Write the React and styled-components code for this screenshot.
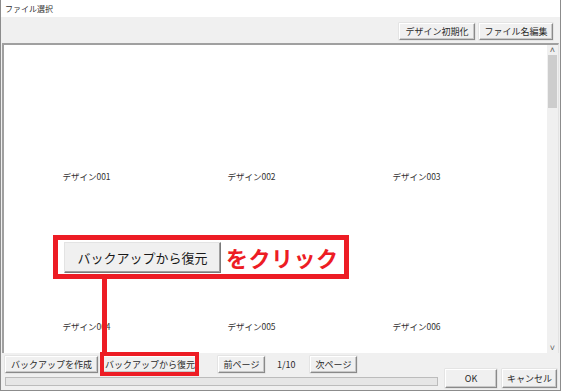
import styled, { createGlobalStyle } from "styled-components";

const GlobalStyle = createGlobalStyle`
  html, body {
    margin: 0;
    padding: 0;
    background: #ffffff;
  }
  * {
    box-sizing: border-box;
  }
  body {
    font-family: "Noto Sans CJK JP", "Liberation Sans", sans-serif;
  }
`;

const designs = [
  "デザイン001",
  "デザイン002",
  "デザイン003",
  "デザイン004",
  "デザイン005",
  "デザイン006",
];

const App = () => {
  return (
    <>
      <GlobalStyle />
      <Window>
        <TitleBar>ファイル選択</TitleBar>
        <Toolbar>
          <WinButton $w={76}>デザイン初期化</WinButton>
          <WinButton $w={74}>ファイル名編集</WinButton>
        </Toolbar>
        <Panel>
          <Grid>
            {designs.map((name) => (
              <Cell key={name}>
                <Thumb />
                <Label>{name}</Label>
              </Cell>
            ))}
          </Grid>
          <ScrollBar>
            <Arrow>˄</Arrow>
            <Thumbnail />
            <Track />
            <Arrow>˅</Arrow>
          </ScrollBar>
        </Panel>
        <Footer>
          <FooterLeft>
            <ButtonRow>
              <WinButton $w={93}>バックアップを作成</WinButton>
              <WinButton $w={94}>バックアップから復元</WinButton>
              <WinButton $w={47} $ml={16}>
                前ページ
              </WinButton>
              <PageCount>1/10</PageCount>
              <WinButton $w={47}>次ページ</WinButton>
            </ButtonRow>
            <Progress />
          </FooterLeft>
          <FooterRight>
            <WinButton $w={52} $h={19}>
              OK
            </WinButton>
            <WinButton $w={55} $h={19}>
              キャンセル
            </WinButton>
          </FooterRight>
        </Footer>

        <Callout>
          <BigButton>バックアップから復元</BigButton>
          <CalloutText>をクリック</CalloutText>
        </Callout>
        <Connector />
        <Highlight />
      </Window>
    </>
  );
};

const Window = styled.div`
  position: relative;
  width: 561px;
  height: 391px;
  display: flex;
  flex-direction: column;
  background: #f0f0f0;
  border: 1px solid #8c8c8c;
  border-top: none;
  overflow: hidden;
`;

const TitleBar = styled.div`
  height: 17px;
  background: #ffffff;
  font-size: 8px;
  line-height: 17px;
  padding-left: 4px;
  color: #333;
`;

const Toolbar = styled.div`
  height: 26px;
  display: flex;
  justify-content: flex-end;
  align-items: flex-start;
  gap: 4px;
  padding: 6px 7px 0 0;
`;

const WinButton = styled.div`
  width: ${(p) => p.$w}px;
  height: ${(p) => p.$h || 17}px;
  margin-left: ${(p) => p.$ml || 0}px;
  display: flex;
  align-items: center;
  justify-content: center;
  font-size: 9px;
  color: #2a2a2a;
  background: #f0f0f0;
  border: 1px solid;
  border-color: #ffffff #8a8a8a #8a8a8a #ffffff;
  box-shadow: inset -1px -1px 0 #c8c8c8, 0 0 0 0.5px #d8d8d8;
  white-space: nowrap;
  flex-shrink: 0;
`;

const Panel = styled.div`
  flex: 1;
  display: flex;
  margin: 0 1px 0 1px;
  background: #ffffff;
  border-top: 2px solid #a0a0a0;
  border-left: 2px solid #a0a0a0;
  border-right: 1px solid #e3e3e3;
  overflow: hidden;
`;

const Grid = styled.div`
  flex: 1;
  display: grid;
  grid-template-columns: repeat(3, 165px);
  grid-auto-rows: 150px;
  align-content: start;
`;

const Cell = styled.div`
  display: flex;
  flex-direction: column;
  align-items: center;
`;

const Thumb = styled.div`
  height: 125px;
`;

const Label = styled.div`
  font-size: 8.5px;
  line-height: 12px;
  color: #333;
`;

const ScrollBar = styled.div`
  width: 11px;
  display: flex;
  flex-direction: column;
  background: #f0f0f0;
`;

const Arrow = styled.div`
  height: 10px;
  font-size: 9px;
  line-height: 10px;
  text-align: center;
  color: #606060;
`;

const Thumbnail = styled.div`
  height: 53px;
  margin: 0 1px;
  background: #cdcdcd;
`;

const Track = styled.div`
  flex: 1;
`;

const Footer = styled.div`
  height: 37px;
  display: grid;
  grid-template-columns: 433px 1fr;
  padding: 3px 3px 2px 4px;
`;

const FooterLeft = styled.div`
  display: flex;
  flex-direction: column;
  gap: 4px;
`;

const ButtonRow = styled.div`
  display: flex;
  align-items: center;
  gap: 5px;
`;

const PageCount = styled.div`
  width: 35px;
  padding-left: 7px;
  font-size: 9px;
  color: #2a2a2a;
`;

const Progress = styled.div`
  height: 9px;
  border: 1px solid #bcbcbc;
  background: #e6e6e6;
`;

const FooterRight = styled.div`
  display: flex;
  justify-content: flex-end;
  align-items: flex-end;
  gap: 5px;
`;

const Callout = styled.div`
  position: absolute;
  left: 52px;
  top: 235px;
  width: 296px;
  height: 44px;
  border: 5px solid #ed1c24;
  background: #ffffff;
  display: flex;
  align-items: center;
  gap: 5px;
  padding-left: 6px;
`;

const BigButton = styled.div`
  width: 157px;
  height: 31px;
  display: flex;
  align-items: center;
  justify-content: center;
  font-size: 13px;
  color: #1a1a1a;
  background: #f0f0f0;
  border: 1px solid;
  border-color: #e3e3e3 #7a7a7a #7a7a7a #e3e3e3;
  box-shadow: inset -1px -1px 0 #a0a0a0;
`;

const CalloutText = styled.div`
  font-size: 22px;
  font-weight: 700;
  color: #ed1c24;
  letter-spacing: 0.5px;
`;

const Connector = styled.div`
  position: absolute;
  left: 101px;
  top: 278px;
  width: 5px;
  height: 76px;
  background: #ed1c24;
`;

const Highlight = styled.div`
  position: absolute;
  left: 99px;
  top: 352px;
  width: 99px;
  height: 24px;
  border: 4px solid #ed1c24;
`;

export default App;
